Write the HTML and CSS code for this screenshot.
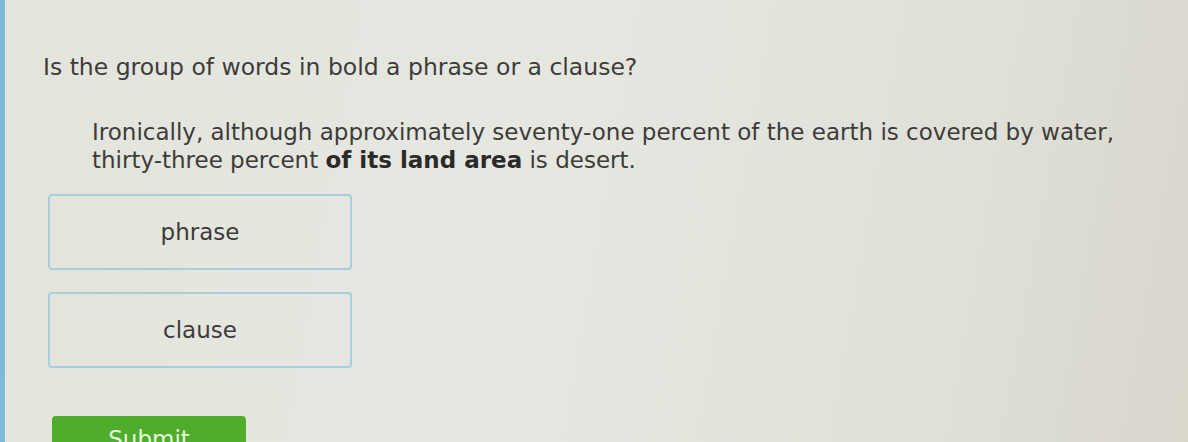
FILE: index.html
```html
<!DOCTYPE html>
<html>
<head>
<meta charset="utf-8">
<link rel="stylesheet" href="styles.css">
</head>
<body>
<div class="page">
  <div class="strip"></div>
  <main class="content">
    <p class="question">Is the group of words in bold a phrase or a clause?</p>
    <p class="passage">Ironically, although approximately seventy-one percent of the earth is covered by water, thirty-three percent <b>of its land area</b> is desert.</p>
    <div class="choices">
      <div class="choice c1">phrase</div>
      <div class="choice c2">clause</div>
    </div>
    <div class="submit">Submit</div>
  </main>
</div>
</body>
</html>
```
FILE: styles.css
```css
html, body {
  margin: 0;
  padding: 0;
  height: 100%;
  overflow: hidden;
}
.page {
  display: flex;
  height: 442px;
  background: linear-gradient(100deg, #e3e4dc 0%, #e6e7e0 45%, #dfe0d8 80%, #d9d6cc 100%);
  font-family: "DejaVu Sans", Verdana, sans-serif;
  color: #3c3c3a;
}
.strip {
  width: 5px;
  background: #7dbcd6;
  flex: none;
}
.content {
  flex: 1;
  padding-left: 38px;
}
.question {
  margin: 52px 0 0 0;
  font-size: 23.5px;
  line-height: 30px;
}
.passage {
  margin: 36px 0 0 49px;
  font-size: 23px;
  line-height: 28px;
  width: 1050px;
}
.passage b {
  color: #2a2a28;
}
.choices {
  margin-top: 20px;
  display: flex;
  flex-direction: column;
  gap: 22px;
  padding-left: 5px;
}
.choice {
  width: 304px;
  height: 76px;
  border: 2px solid #a6cfe0;
  border-radius: 4px;
  display: flex;
  align-items: center;
  justify-content: center;
  font-size: 23px;
  box-sizing: border-box;
}
.submit {
  margin: 48px 0 0 9px;
  width: 194px;
  height: 40px;
  background: #4fad2c;
  border-radius: 4px 4px 0 0;
  color: #e8f5e0;
  font-size: 23px;
  text-align: center;
  padding-top: 10px;
  box-sizing: border-box;
}
```
